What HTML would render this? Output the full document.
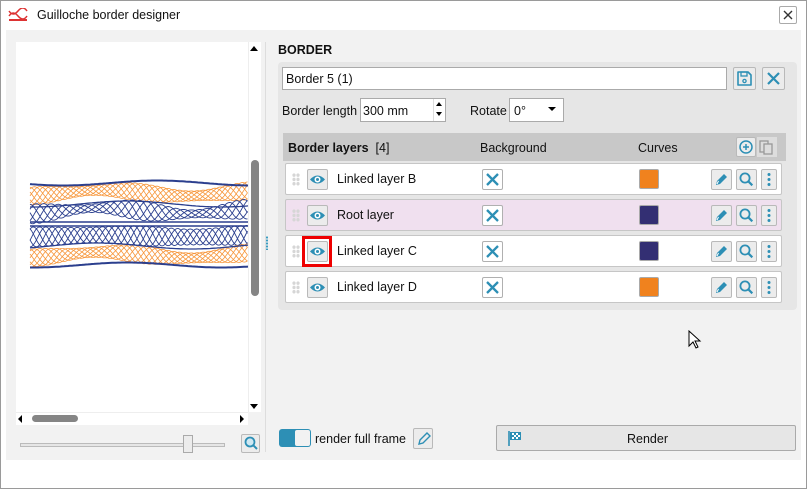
<!DOCTYPE html>
<html><head><meta charset="utf-8"><style>
*{box-sizing:border-box;margin:0;padding:0}
body{width:807px;height:489px;background:#fff;font-family:"Liberation Sans",sans-serif;font-size:12px;color:#111;position:relative;overflow:hidden}
.a{position:absolute}
.win{left:0;top:0;width:807px;height:489px;border:1px solid #9a9a9a}
.btn{position:absolute;background:#ececec;border:1px solid #b9b9b9;border-radius:2px}
.row{position:absolute;left:285px;width:497px;height:32px;background:#fff;border:1px solid #c6c6c6;border-radius:2px}
.row .t{position:absolute;left:51px;top:8px;font-size:12.5px}
.sw{position:absolute;width:20px;height:20px;border-radius:2px;border:1px solid #aaa}
.xb{position:absolute;left:196px;top:5px;width:21px;height:21px;background:#fff;border:1px solid #b0b0b0;border-radius:2px}
.dr{position:absolute;left:6px;top:9px;width:8px;height:13px;background:radial-gradient(circle,#d6d6d6 1.6px,transparent 1.8px) 0 0/4px 4.3px}
</style></head><body>
<div class="a win"></div>
<svg class="a" style="left:8px;top:8px" width="20" height="14" viewBox="0 0 20 14"><path d="M1 3q4 6 9 0t9 0M1 8q4-6 9 0t9 0" stroke="#d33" fill="none" stroke-width="1.5"/><rect x="1" y="11" width="18" height="2" fill="#d33"/></svg>
<div class="a" style="left:37px;top:8px;font-size:12.5px">Guilloche border designer</div>
<div class="btn" style="left:779px;top:6px;width:18px;height:18px;background:#fff;border-color:#aaa"><svg width="16" height="16"><path d="M4 4l8 8M12 4l-8 8" stroke="#333" stroke-width="1.4"/></svg></div>
<div class="a" style="left:6px;top:30px;width:795px;height:430px;background:#f2f2f2"></div>
<div class="a" style="left:16px;top:42px;width:232px;height:370px;background:#fff"></div>
<svg class="a" id="g" style="left:16px;top:42px" width="232" height="370"></svg>
<div class="a" style="left:248px;top:42px;width:13px;height:370px;background:#fff;border-left:1px solid #eee"></div>
<div class="a" style="left:250px;top:46px;width:0;height:0;border:4px solid transparent;border-bottom:5px solid #000;border-top:0"></div>
<div class="a" style="left:250px;top:404px;width:0;height:0;border:4px solid transparent;border-top:5px solid #000;border-bottom:0"></div>
<div class="a" style="left:251px;top:160px;width:8px;height:136px;background:#858585;border-radius:4px"></div>
<div class="a" style="left:16px;top:412px;width:232px;height:13px;background:#fff;border-top:1px solid #eee"></div>
<div class="a" style="left:18px;top:415px;border:4px solid transparent;border-right:4px solid #000;border-left:0"></div>
<div class="a" style="left:240px;top:415px;border:4px solid transparent;border-left:4px solid #000;border-right:0"></div>
<div class="a" style="left:32px;top:415px;width:46px;height:7px;background:#858585;border-radius:4px"></div>
<div class="a" style="left:265px;top:42px;width:1px;height:410px;background:#ddd"></div>
<div class="a" style="left:266px;top:236px;width:2px;height:14px;background:radial-gradient(circle,#3a9cc0 1px,transparent 1.2px) 0 0/2px 3px"></div>
<div class="a" style="left:20px;top:443px;width:205px;height:4px;border:1px solid #bbb;background:#e6e6e6"></div>
<div class="a" style="left:183px;top:435px;width:10px;height:18px;background:#ececec;border:1px solid #aaa"></div>
<div class="btn" style="left:241px;top:434px;width:19px;height:19px"><svg width="17" height="17"><circle cx="8" cy="7" r="4.5" stroke="#2d8fb5" stroke-width="1.8" fill="#cfe8f2"/><path d="M11 10l4 4" stroke="#2d8fb5" stroke-width="2"/></svg></div>

<div class="a" style="left:278px;top:43px;font-weight:bold;font-size:12.5px">BORDER</div>
<div class="a" style="left:278px;top:62px;width:519px;height:248px;background:#e6e6e6;border-radius:4px"></div>
<div class="a" style="left:282px;top:67px;width:445px;height:23px;background:#fff;border:1px solid #aaa;padding:4px 3px;font-size:12.5px">Border 5 (1)</div>
<div class="btn" style="left:733px;top:67px;width:23px;height:23px"><svg width="21" height="21"><path d="M4 4h10l3 3v10H4z" stroke="#2d8fb5" stroke-width="1.6" fill="none" stroke-linejoin="round"/><rect x="7" y="4" width="6" height="4" stroke="#2d8fb5" fill="none" stroke-width="1.3"/><circle cx="10.5" cy="13" r="1.6" stroke="#2d8fb5" fill="none" stroke-width="1.3"/></svg></div>
<div class="btn" style="left:762px;top:67px;width:23px;height:23px"><svg width="21" height="21"><path d="M5 5l11 11M16 5L5 16" stroke="#2d8fb5" stroke-width="2.2"/></svg></div>
<div class="a" style="left:282px;top:104px;font-size:12.5px">Border length</div>
<div class="a" style="left:360px;top:98px;width:86px;height:24px;background:#fff;border:1px solid #aaa;padding:5px 2px;font-size:12.5px">300 mm</div>
<div class="a" style="left:433px;top:99px;width:1px;height:22px;background:#ddd"></div>
<div class="a" style="left:436px;top:102px;border:3.5px solid transparent;border-bottom:4px solid #000;border-top:0"></div>
<div class="a" style="left:436px;top:112px;border:3.5px solid transparent;border-top:4px solid #000;border-bottom:0"></div>
<div class="a" style="left:470px;top:104px;font-size:12.5px">Rotate</div>
<div class="a" style="left:509px;top:98px;width:55px;height:24px;background:#fff;border:1px solid #aaa;padding:5px 4px;font-size:12.5px">0°</div>
<div class="a" style="left:548px;top:107px;border:4px solid transparent;border-top:4px solid #000;border-bottom:0"></div>

<div class="a" style="left:283px;top:133px;width:503px;height:28px;background:#c8c8c8"></div>
<div class="a" style="left:288px;top:141px;font-size:12.5px"><b>Border layers</b>&nbsp; [4]</div>
<div class="a" style="left:480px;top:141px;font-size:12.5px">Background</div>
<div class="a" style="left:638px;top:141px;font-size:12.5px">Curves</div>
<div class="btn" style="left:736px;top:137px;width:20px;height:20px"><svg width="18" height="18"><circle cx="9" cy="9" r="6" stroke="#2d8fb5" stroke-width="1.5" fill="none"/><path d="M9 6v6M6 9h6" stroke="#2d8fb5" stroke-width="1.5"/></svg></div>
<div class="a" style="left:757px;top:137px;width:20px;height:20px;background:#ddd"><svg width="20" height="20"><rect x="3" y="4" width="8" height="11" stroke="#999" fill="none" stroke-width="1.3"/><rect x="7" y="7" width="8" height="10" stroke="#999" fill="#ddd" stroke-width="1.3"/></svg></div>

<div id="rows"></div>
<div class="a" style="left:302px;top:236px;width:30px;height:31px;border:3px solid #e00"></div>

<div class="a" style="left:279px;top:429px;width:32px;height:18px;border-radius:3px;background:#2d8fb5"></div>
<div class="a" style="left:295px;top:430px;width:15px;height:16px;border-radius:2px;background:#f2f2f2"></div>
<div class="a" style="left:315px;top:432px;font-size:12.5px">render full frame</div>
<div class="btn" style="left:413px;top:428px;width:20px;height:21px"><svg width="18" height="19"><path d="M5 15l1-4 7-7 3 3-7 7z" stroke="#2d8fb5" stroke-width="1.4" fill="none"/></svg></div>
<div class="btn" style="left:496px;top:425px;width:300px;height:26px;background:#e6e6e6;border-color:#aaa"><svg class="a" style="left:10px;top:3px" width="16" height="18"><path d="M2 2v15" stroke="#2d8fb5" stroke-width="1.6"/><rect x="3" y="3" width="11" height="8" fill="#2d8fb5"/><path d="M5 4h2v2H5zM9 4h2v2H9zM7 6h2v2H7zM11 6h2v2h-2zM5 8h2v2H5zM9 8h2v2H9z" fill="#fff"/></svg><div class="a" style="left:130px;top:6px;font-size:12.5px">Render</div></div>
<svg class="a" style="left:688px;top:330px" width="14" height="20"><path d="M1 1v15l4-4 3 6 2-1-3-6h5z" fill="#fff" stroke="#000"/></svg>

<script>
var rows=[["Linked layer B",163,"#fff","#f0821e"],["Root layer",199,"#f0e0ef","#332f73"],["Linked layer C",235,"#fff","#332f73"],["Linked layer D",271,"#fff","#f0821e"]];
var eye='<svg width="19" height="19"><path d="M2 9.5q7.5-8 15 0q-7.5 8-15 0z" fill="#2d8fb5"/><circle cx="9.5" cy="9.5" r="3" fill="#fff"/><circle cx="9.5" cy="9.5" r="1.5" fill="#2d8fb5"/></svg>';
var x='<svg width="19" height="19"><path d="M4 4l11 11M15 4L4 15" stroke="#2d8fb5" stroke-width="2.3"/></svg>';
var pen='<svg width="19" height="19"><path d="M4 15l1-4 7-7 3 3-7 7z" fill="#2d8fb5"/><path d="M5 14l1.5-3" stroke="#fff"/></svg>';
var mag='<svg width="19" height="19"><circle cx="8" cy="8" r="4.6" stroke="#2d8fb5" stroke-width="1.8" fill="none"/><path d="M11.3 11.3l4 4" stroke="#2d8fb5" stroke-width="2.2"/></svg>';
var dots='<svg width="15" height="19"><circle cx="7" cy="4.5" r="1.5" fill="#2d8fb5"/><circle cx="7" cy="9.5" r="1.5" fill="#2d8fb5"/><circle cx="7" cy="14.5" r="1.5" fill="#2d8fb5"/></svg>';
var h='';
rows.forEach(function(r){
h+='<div class="row" style="top:'+r[1]+'px;background:'+r[2]+'"><div class="dr"></div>'+
'<div class="btn" style="left:21px;top:5px;width:21px;height:21px">'+eye+'</div>'+
'<div class="t">'+r[0]+'</div><div class="xb">'+x+'</div>'+
'<div class="sw" style="left:353px;top:5px;background:'+r[3]+'"></div>'+
'<div class="btn" style="left:425px;top:5px;width:21px;height:21px">'+pen+'</div>'+
'<div class="btn" style="left:450px;top:5px;width:21px;height:21px">'+mag+'</div>'+
'<div class="btn" style="left:475px;top:5px;width:16px;height:21px">'+dots+'</div></div>';});
document.getElementById('rows').innerHTML=h;
function band(m0,a0,col,n,f,w,pa,ea){var s='';for(var k=0;k<n;k++){var d='';for(var i=0;i<=218;i+=1.5){var xx=14+i;var m=m0+pa*Math.sin(xx/26+1.3);var a=a0+ea*Math.sin(xx/17+0.5);var y=m+a*Math.sin(xx*f+k*2*Math.PI/n);d+=(i?'L':'M')+xx+' '+y.toFixed(1);}s+='<path d="'+d+'" stroke="'+col+'" stroke-width="'+w+'" fill="none"/>';}return s;}
function line(y,amp,col,w,ph){var d='';for(var i=0;i<=218;i+=2){var xx=14+i;d+=(i?'L':'M')+xx+' '+(y+amp*Math.sin(xx/30+ph)).toFixed(1);}return '<path d="'+d+'" stroke="'+col+'" stroke-width="'+w+'" fill="none"/>';}
var g='';
g+=band(151,7,'#f7963a',7,0.16,0.8,3,2);
g+=band(169,7,'#2b3f8e',5,0.17,0.9,3,3);
g+=band(194,9,'#2b3f8e',5,0.2,0.9,1,1);
g+=band(213,7,'#f7963a',7,0.16,0.8,3,2);
g+=line(141,2.5,'#2b3f8e',2,0);g+=line(162,3,'#2b3f8e',1.3,1);g+=line(180,0,'#2b3f8e',1.6,0);g+=line(184,0,'#2b3f8e',1.6,0);g+=line(204,3,'#2b3f8e',1.3,2);g+=line(223,2.5,'#2b3f8e',2,1);
document.getElementById('g').innerHTML=g;
</script>
</body></html>
